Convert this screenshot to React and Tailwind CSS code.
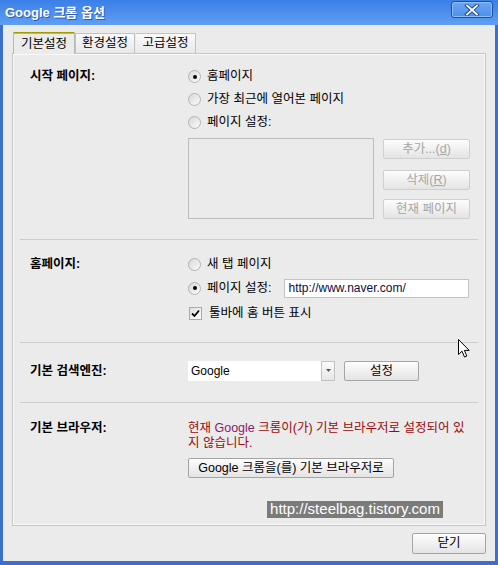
import React from 'react'

const ff = "font-['Liberation_Sans','Noto_Sans_CJK_KR',sans-serif]"

function Radio({ checked }) {
  return (
    <span className="flex h-[13px] w-[13px] shrink-0 items-center justify-center rounded-full border border-[#b3b3b3] bg-gradient-to-br from-[#d8d8d8] to-[#fbfbfb]">
      {checked && <span className="h-[4px] w-[4px] rounded-full bg-black" />}
    </span>
  )
}

function Btn({ children, disabled, className }) {
  return (
    <div className={`flex h-[20px] items-center justify-center rounded-[2px] border bg-gradient-to-b from-[#fdfdfd] to-[#e4e4e4] ${disabled ? 'border-[#cfcfcf] text-[#a6a6a6]' : 'border-[#a5a5a5] text-black'} ${className}`}>
      {children}
    </div>
  )
}

function Section({ label, children, className }) {
  return (
    <div className={`flex pl-[17px] ${className}`}>
      <div className="flex h-[23px] w-[158px] shrink-0 items-center font-bold">{label}</div>
      <div className="flex flex-col">{children}</div>
    </div>
  )
}

const Sep = () => <div className="mx-[7px] h-px bg-[#cdcdcd]" />

export default function App() {
  return (
    <div className={`relative flex h-[565px] w-[498px] flex-col bg-[#2f63c4] text-[12.5px] text-black ${ff}`}>
      {/* title bar */}
      <div className="flex h-[25px] shrink-0 items-start justify-between bg-gradient-to-b from-[#3b7fe8] to-[#5f9ef3] pl-[5px] pr-[5px]">
        <span className="mt-[5px] text-[13px] font-bold leading-[16px] text-white [text-shadow:1px_1px_0_#2a5ab8]">Google 크롬 옵션</span>
        <div className="mt-[1px] flex h-[17px] w-[42px] items-center justify-center rounded-[3px] border border-[#234c9c] bg-gradient-to-b from-[#6aa6f5] to-[#4f8fea] shadow-[inset_0_0_0_1px_#8fbef8]">
          <svg width="16" height="12" viewBox="0 0 16 12">
            <path d="M3 1.5 L13 10.5 M13 1.5 L3 10.5" stroke="#1c3f82" strokeWidth="3.6" strokeLinecap="square" />
            <path d="M3 1.5 L13 10.5 M13 1.5 L3 10.5" stroke="#ffffff" strokeWidth="1.8" strokeLinecap="square" />
          </svg>
        </div>
      </div>

      {/* body */}
      <div className="flex flex-1 flex-col border-x-[3px] border-b-[4px] border-x-[#3d6ec9] border-b-[#3d6ec9] bg-[#ebebeb] pl-[9px] pr-[9px]">
        {/* tabs */}
        <div className="mt-[7px] flex h-[21px] items-end pl-[1px]">
          <div className="relative z-10 mb-[-1px] flex h-[22px] w-[62px] items-center justify-center border-x border-[#b8b8b8] bg-[#ebebeb] pt-[2px]">
            <div className="absolute inset-x-0 top-0 h-[2px] bg-gradient-to-b from-[#8f8a00] to-[#e2d400]" />
            <span>기본설정</span>
          </div>
          <div className="flex h-[20px] w-[60px] items-center justify-center border-x border-t border-[#c2c2c2] bg-gradient-to-b from-[#fafafa] to-[#e8e8e8]">환경설정</div>
          <div className="ml-[1px] flex h-[20px] w-[60px] items-center justify-center border-r border-t border-[#c2c2c2] bg-gradient-to-b from-[#fafafa] to-[#e8e8e8]">고급설정</div>
        </div>

        {/* panel */}
        <div className="flex h-[473px] flex-col border border-[#c6c6c6] shadow-[inset_0_0_0_1px_#f8f8f8]">
          <Section label="시작 페이지:" className="pt-[11px]">
            <div className="flex h-[23px] items-center gap-[6px]"><Radio checked />홈페이지</div>
            <div className="flex h-[23px] items-center gap-[6px]"><Radio />가장 최근에 열어본 페이지</div>
            <div className="flex h-[23px] items-center gap-[6px]"><Radio />페이지 설정:</div>
            <div className="mt-[4px] flex gap-[9px]">
              <div className="h-[81px] w-[186px] border border-[#bdbdbd]" />
              <div className="flex flex-col pt-[1px]">
                <Btn disabled className="w-[87px]">추가...(<span className="underline">d</span>)</Btn>
                <Btn disabled className="mt-[11px] w-[87px]">삭제(<span className="underline">R</span>)</Btn>
                <Btn disabled className="mt-[9px] w-[87px]">현재 페이지</Btn>
              </div>
            </div>
          </Section>
          <div className="mt-[20px]"><Sep /></div>

          <Section label="홈페이지:" className="pt-[13px]">
            <div className="flex h-[23px] items-center gap-[6px]"><Radio />새 탭 페이지</div>
            <div className="flex h-[24px] items-center gap-[6px]">
              <Radio checked />페이지 설정:
              <div className="ml-[7px] flex h-[19px] w-[185px] items-center border border-[#c3c3c3] bg-white pl-[3px] text-[12px] text-[#0d0d40]">http://www.naver.com/</div>
            </div>
            <div className="flex h-[27px] items-center gap-[7px] pl-[1px]">
              <span className="flex h-[13px] w-[13px] items-center justify-center border border-[#a9a9a9] bg-gradient-to-br from-[#dedede] to-white">
                <svg width="9" height="9" viewBox="0 0 9 9"><path d="M1 4.5 L3.5 7 L8 1.5" fill="none" stroke="#000" strokeWidth="1.8" /></svg>
              </span>
              툴바에 홈 버튼 표시
            </div>
          </Section>
          <div className="mt-[15px]"><Sep /></div>

          <Section label="기본 검색엔진:" className="items-start pt-[17px]">
            <div className="flex items-center">
              <div className="flex h-[20px] w-[147px]">
                <div className="flex flex-1 items-center bg-white pl-[3px] text-[12px]">Google</div>
                <div className="flex w-[14px] items-center justify-center border border-[#c3c3c3] bg-gradient-to-b from-[#fbfbfb] to-[#e7e7e7]">
                  <svg width="5" height="3" viewBox="0 0 5 3"><path d="M0 0 H5 L2.5 3 Z" fill="#555" /></svg>
                </div>
              </div>
              <Btn className="ml-[9px] mt-[1px] w-[75px]">설정</Btn>
            </div>
          </Section>
          <div className="mt-[19px]"><Sep /></div>

          <Section label="기본 브라우저:" className="pt-[14px]">
            <div className="pt-[4px] leading-[15px] text-[#9b0a0a]">
              현재 <span className="text-[#8a1a6a]">Google</span> 크롬이(가) 기본 브라우저로 설정되어 있
              <br />지 않습니다.
            </div>
            <Btn className="mt-[7px] w-[206px]">Google 크롬을(를) 기본 브라우저로</Btn>
          </Section>
        </div>

        {/* footer */}
        <div className="flex flex-1 items-start justify-end pt-[7px]">
          <Btn className="h-[21px] w-[74px]">닫기</Btn>
        </div>
      </div>

      {/* watermark */}
      <div className="absolute left-[267px] top-[501px] flex h-[17px] w-[176px] items-center justify-center bg-[#7b7b7b] font-['Liberation_Sans',sans-serif] text-[15px] text-white">
        http://steelbag.tistory.com
      </div>

      {/* mouse cursor */}
      <svg className="absolute left-[458px] top-[339px]" width="13" height="20" viewBox="0 0 13 20">
        <path d="M0.5 0.5 V15.5 L4 12.2 L6.5 18 L8.8 17 L6.4 11.4 H11.2 Z" fill="#fff" stroke="#000" strokeWidth="1" strokeLinejoin="miter" />
      </svg>
    </div>
  )
}
